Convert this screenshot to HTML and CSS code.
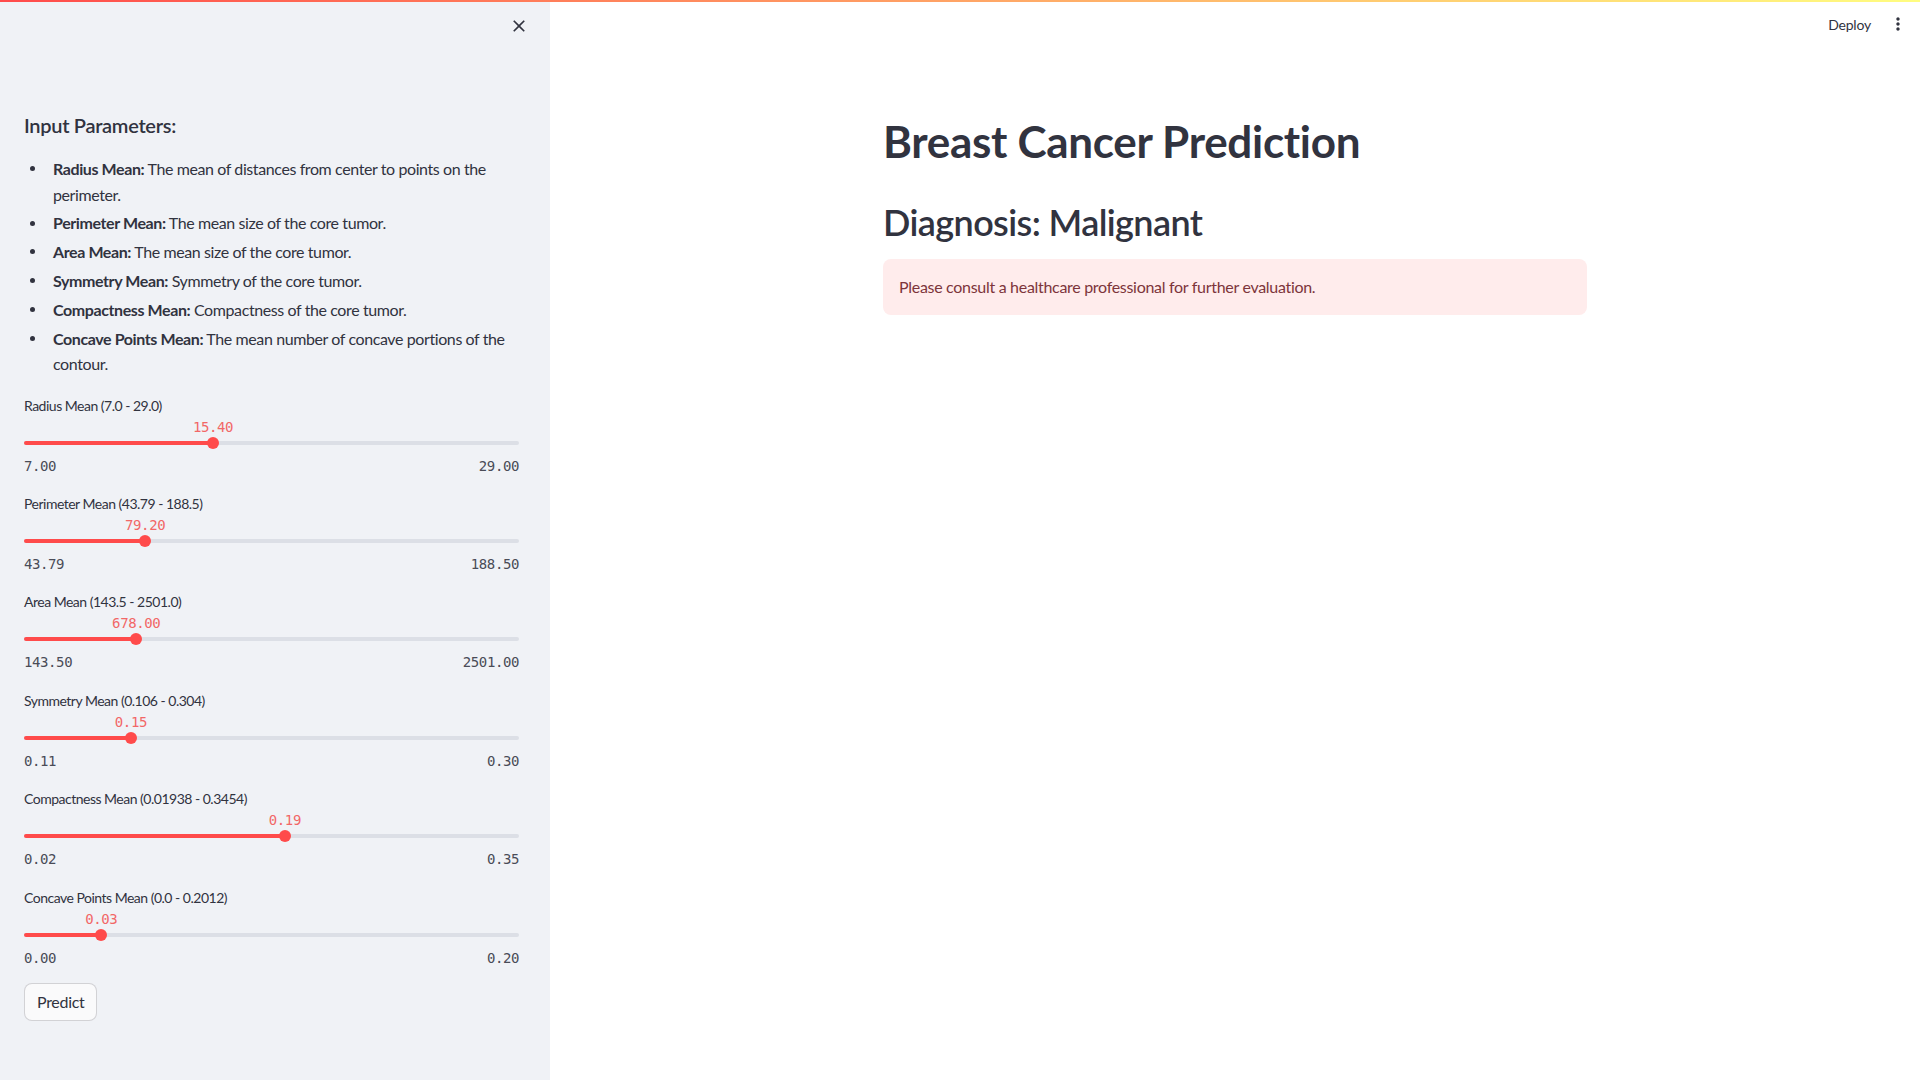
FILE: index.html
```html
<!DOCTYPE html>
<html lang="en">
<head>
<meta charset="utf-8">
<title>Breast Cancer Prediction</title>
<link rel="stylesheet" href="styles.css">
</head>
<body>
<div class="decor"></div>
<div class="app">
  <aside class="sidebar">
    <div class="sb-head">
      <svg class="icon-close" viewBox="0 0 24 24" width="20" height="20"><path d="M19 6.41L17.59 5 12 10.59 6.41 5 5 6.41 10.59 12 5 17.59 6.41 19 12 13.41 17.59 19 19 17.59 13.41 12z" fill="#31333f"/></svg>
    </div>
    <h3 class="sb-title">Input Parameters:</h3>
    <ul class="params">
      <li><b>Radius Mean:</b> The mean of distances from center to points on the perimeter.</li>
      <li><b>Perimeter Mean:</b> The mean size of the core tumor.</li>
      <li><b>Area Mean:</b> The mean size of the core tumor.</li>
      <li><b>Symmetry Mean:</b> Symmetry of the core tumor.</li>
      <li><b>Compactness Mean:</b> Compactness of the core tumor.</li>
      <li><b>Concave Points Mean:</b> The mean number of concave portions of the contour.</li>
    </ul>
    <div class="sliders">
      <div class="slider">
        <div class="slider-label">Radius Mean (7.0 - 29.0)</div>
        <div class="rail">
          <div class="track"><div class="fill" style="width:38.18%"></div></div>
          <div class="thumb" style="left:38.18%"><span class="val">15.40</span></div>
        </div>
        <div class="minmax"><span>7.00</span><span>29.00</span></div>
      </div>
      <div class="slider">
        <div class="slider-label">Perimeter Mean (43.79 - 188.5)</div>
        <div class="rail">
          <div class="track"><div class="fill" style="width:24.47%"></div></div>
          <div class="thumb" style="left:24.47%"><span class="val">79.20</span></div>
        </div>
        <div class="minmax"><span>43.79</span><span>188.50</span></div>
      </div>
      <div class="slider">
        <div class="slider-label">Area Mean (143.5 - 2501.0)</div>
        <div class="rail">
          <div class="track"><div class="fill" style="width:22.67%"></div></div>
          <div class="thumb" style="left:22.67%"><span class="val">678.00</span></div>
        </div>
        <div class="minmax"><span>143.50</span><span>2501.00</span></div>
      </div>
      <div class="slider">
        <div class="slider-label">Symmetry Mean (0.106 - 0.304)</div>
        <div class="rail">
          <div class="track"><div class="fill" style="width:21.6%"></div></div>
          <div class="thumb" style="left:21.6%"><span class="val">0.15</span></div>
        </div>
        <div class="minmax"><span>0.11</span><span>0.30</span></div>
      </div>
      <div class="slider">
        <div class="slider-label">Compactness Mean (0.01938 - 0.3454)</div>
        <div class="rail">
          <div class="track"><div class="fill" style="width:52.7%"></div></div>
          <div class="thumb" style="left:52.7%"><span class="val">0.19</span></div>
        </div>
        <div class="minmax"><span>0.02</span><span>0.35</span></div>
      </div>
      <div class="slider">
        <div class="slider-label">Concave Points Mean (0.0 - 0.2012)</div>
        <div class="rail">
          <div class="track"><div class="fill" style="width:15.6%"></div></div>
          <div class="thumb" style="left:15.6%"><span class="val">0.03</span></div>
        </div>
        <div class="minmax"><span>0.00</span><span>0.20</span></div>
      </div>
    </div>
    <button class="btn">Predict</button>
  </aside>
  <main class="main">
    <header class="topbar">
      <span class="deploy">Deploy</span>
      <svg class="icon-more" viewBox="0 0 24 24" width="20" height="20"><path d="M12 8c1.1 0 2-.9 2-2s-.9-2-2-2-2 .9-2 2 .9 2 2 2zm0 2c-1.1 0-2 .9-2 2s.9 2 2 2 2-.9 2-2-.9-2-2-2zm0 6c-1.1 0-2 .9-2 2s.9 2 2 2 2-.9 2-2-.9-2-2-2z" fill="#31333f"/></svg>
    </header>
    <section class="content">
      <h1 class="title">Breast Cancer Prediction</h1>
      <h2 class="diag">Diagnosis: Malignant</h2>
      <div class="alert">Please consult a healthcare professional for further evaluation.</div>
    </section>
  </main>
</div>
</body>
</html>
```
FILE: styles.css
```css
* { box-sizing: border-box; }
html, body { margin: 0; height: 100%; }
body {
  font-family: Lato, "Noto Sans", sans-serif;
  color: #31333f;
  background: #ffffff;
}
.decor {
  position: fixed;
  top: 0; left: 0; right: 0;
  height: 2px;
  background: linear-gradient(90deg, #ff4b4b, #fffd80);
  z-index: 10;
}
.app { display: flex; height: 100vh; }
.sidebar {
  width: 550px;
  flex: none;
  background: #f0f2f6;
  padding: 0 31px 0 24px;
}
.sb-head {
  height: 52px;
  display: flex;
  justify-content: flex-end;
  align-items: center;
  margin-right: -10px;
}
.sb-title {
  margin: 61px 0 0;
  font-size: 20px;
  line-height: 24px;
  font-weight: 600;
  letter-spacing: -0.3px;
}
.params {
  margin: 19px 0 0;
  padding: 0;
  list-style: none;
}
.params li {
  position: relative;
  padding-left: 29px;
  font-size: 16px;
  line-height: 25.6px;
  margin-bottom: 3.2px;
  letter-spacing: -0.4px;
}
.params li::before {
  content: "";
  position: absolute;
  left: 5.5px;
  top: 10.3px;
  width: 5px;
  height: 5px;
  border-radius: 50%;
  background: #31333f;
}
.params li b { font-weight: 700; }
.sliders { margin-top: 19px; }
.slider { margin-bottom: 18.4px; }
.slider-label {
  font-size: 14px;
  line-height: 20px;
  letter-spacing: -0.5px;
}
.rail { position: relative; height: 34px; }
.track {
  position: absolute;
  left: 0; right: 0; top: 25px;
  height: 4px;
  border-radius: 2px;
  background: #dcdfe6;
}
.fill { height: 100%; background: #ff4b4b; border-radius: 2px; }
.thumb {
  position: absolute;
  top: 21px;
  width: 12px; height: 12px;
  margin-left: -6px;
  border-radius: 50%;
  background: #ff4b4b;
}
.val {
  position: absolute;
  bottom: 14px;
  left: 50%;
  transform: translateX(-50%);
  font-family: "DejaVu Sans Mono", "Liberation Mono", monospace;
  font-size: 14px;
  line-height: 16px;
  color: #f26767;
  white-space: nowrap;
  letter-spacing: -0.4px;
}
.minmax {
  margin-top: 6px;
  display: flex;
  justify-content: space-between;
  font-family: "DejaVu Sans Mono", "Liberation Mono", monospace;
  font-size: 14px;
  line-height: 20px;
  color: #4a4c57;
  letter-spacing: -0.4px;
}
.btn {
  margin-top: -3px;
  font-family: inherit;
  font-size: 16px;
  line-height: 24px;
  padding: 6px 12px;
  background: #fafafb;
  color: #31333f;
  border: 1px solid rgba(49, 51, 63, 0.2);
  border-radius: 8px;
  letter-spacing: -0.3px;
}
.main { flex: 1; display: flex; flex-direction: column; }
.topbar {
  height: 48px;
  display: flex;
  justify-content: flex-end;
  align-items: center;
  padding-right: 12px;
  gap: 17px;
}
.deploy { font-size: 14px; color: #31333f; letter-spacing: -0.2px; }
.content {
  width: 736px;
  margin: 0 auto;
  padding: 0 16px;
}
.title {
  margin: 67px 0 0;
  font-size: 44px;
  line-height: 53px;
  font-weight: 700;
  letter-spacing: -0.3px;
}
.diag {
  margin: 32.5px 0 0;
  font-size: 36px;
  line-height: 43px;
  font-weight: 600;
  letter-spacing: -0.6px;
}
.alert {
  margin-top: 15.5px;
  padding: 16px;
  font-size: 16px;
  line-height: 24px;
  background: #ffecec;
  color: #7d353b;
  border-radius: 8px;
  letter-spacing: -0.3px;
}
```
